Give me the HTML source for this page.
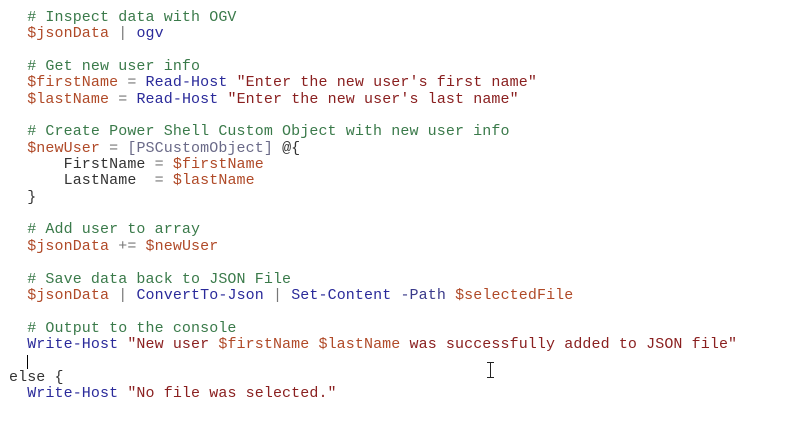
<!DOCTYPE html>
<html><head><meta charset="utf-8"><style>
html,body{margin:0;padding:0;background:#fff;width:792px;height:429px;overflow:hidden}
pre{position:absolute;left:9px;top:10px;margin:0;font-family:"Liberation Mono",monospace;font-size:15px;letter-spacing:0.1px;line-height:16.35px;color:#333}
.c{color:#3a7a4a}.v{color:#b04a28}.k{color:#2a2a9a}.s{color:#8a2020}.o{color:#777}.t{color:#6a6a88}.p{color:#3a3a8a}
.cur{position:absolute;left:27px;top:355px;width:1px;height:14px;background:#000}
.ib{position:absolute;left:490px;top:362px;width:1px;height:16px;background:#222}
.ib:before,.ib:after{content:"";position:absolute;left:-3px;width:7px;height:1px;background:#222}
.ib:before{top:0}.ib:after{bottom:0}
</style></head><body>
<pre>  <span class="c"># Inspect data with OGV</span>
  <span class="v">$jsonData</span> <span class="o">|</span> <span class="k">ogv</span>

  <span class="c"># Get new user info</span>
  <span class="v">$firstName</span> <span class="o">=</span> <span class="k">Read-Host</span> <span class="s">"Enter the new user's first name"</span>
  <span class="v">$lastName</span> <span class="o">=</span> <span class="k">Read-Host</span> <span class="s">"Enter the new user's last name"</span>

  <span class="c"># Create Power Shell Custom Object with new user info</span>
  <span class="v">$newUser</span> <span class="o">=</span> <span class="t">[PSCustomObject]</span> @{
      FirstName <span class="o">=</span> <span class="v">$firstName</span>
      LastName  <span class="o">=</span> <span class="v">$lastName</span>
  }

  <span class="c"># Add user to array</span>
  <span class="v">$jsonData</span> <span class="o">+=</span> <span class="v">$newUser</span>

  <span class="c"># Save data back to JSON File</span>
  <span class="v">$jsonData</span> <span class="o">|</span> <span class="k">ConvertTo-Json</span> <span class="o">|</span> <span class="k">Set-Content</span> <span class="p">-Path</span> <span class="v">$selectedFile</span>

  <span class="c"># Output to the console</span>
  <span class="k">Write-Host</span> <span class="s">"New user <span class="v">$firstName</span> <span class="v">$lastName</span> was successfully added to JSON file"</span>

else {
  <span class="k">Write-Host</span> <span class="s">"No file was selected."</span>
</pre>
<div class="cur"></div>
<div class="ib"></div>
</body></html>
